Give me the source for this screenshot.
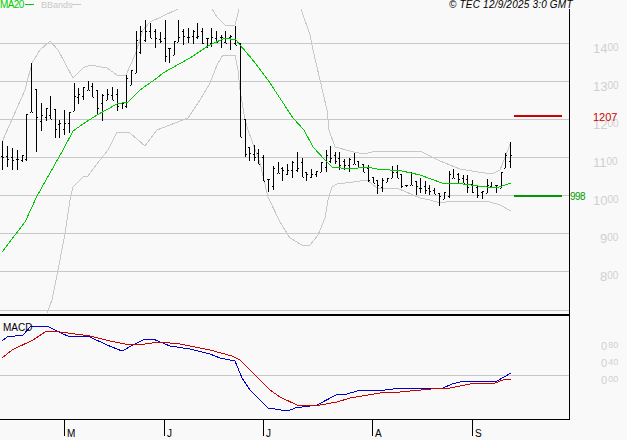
// hi, lo per bar, read off the chart; x is the bar's pixel column
const bars: [number, number, number][] = [
  [2, 141, 170], [7, 146, 167], [12, 148, 170], [17, 150, 170], [22, 155, 162], [26, 114, 161], [31, 63, 112], [36, 89, 152],
  [41, 103, 131], [46, 108, 121], [50, 96, 119], [55, 109, 138], [59, 120, 138], [64, 110, 135], [69, 112, 133], [74, 83, 111],
  [78, 88, 104], [83, 87, 100], [88, 81, 90], [92, 83, 97], [97, 90, 115], [102, 94, 121], [107, 89, 100], [112, 87, 100],
  [117, 89, 111], [122, 103, 109], [126, 75, 108], [131, 70, 85], [136, 31, 73], [140, 26, 54], [145, 20, 42], [150, 23, 38],
  [155, 29, 48], [160, 32, 43], [165, 20, 62], [169, 48, 63], [174, 41, 55], [178, 20, 42], [183, 29, 45], [188, 28, 43],
  [193, 30, 44], [197, 23, 39], [202, 28, 44], [207, 38, 48], [211, 28, 47], [216, 31, 43], [221, 35, 48], [225, 31, 43],
  [230, 35, 50], [235, 26, 45], [240, 43, 137], [245, 119, 157], [249, 147, 161], [254, 145, 161], [258, 149, 164], [263, 155, 181],
  [268, 179, 192], [273, 166, 190], [278, 162, 173], [282, 167, 181], [287, 164, 175], [292, 161, 178], [297, 152, 172], [302, 158, 177],
  [306, 172, 181], [311, 169, 178], [316, 171, 177], [321, 162, 172], [326, 150, 172], [330, 146, 163], [335, 152, 164], [339, 152, 170],
  [344, 159, 170], [349, 158, 172], [354, 153, 164], [358, 161, 167], [363, 164, 172], [368, 165, 182], [373, 177, 183], [377, 180, 194],
  [382, 178, 192], [387, 178, 182], [392, 166, 178], [397, 165, 178], [401, 174, 188], [406, 185, 187], [411, 172, 185], [416, 181, 195],
  [420, 178, 193], [425, 181, 194], [429, 185, 195], [434, 188, 194], [439, 193, 206], [444, 192, 199], [449, 171, 198], [453, 169, 178],
  [458, 173, 183], [463, 175, 183], [467, 175, 193], [472, 180, 193], [477, 186, 198], [482, 191, 199], [487, 179, 193], [491, 182, 187],
  [496, 185, 193], [501, 172, 188], [505, 153, 168], [510, 142, 168],
];

const ma20 =
  "2,252 25,222 37,196 50,173 63,150 73,131 83,124 97,115 117,104 128,102 140,90 157,78 163,73 190,58 208,46 225,38 236,40 240,45 252,59 268,80 293,118 304,130 313,147 325,160 332,167 350,169 367,167 377,169 402,171 420,175 442,183 463,184 478,186 496,188 502,186 511,183";
const upperA =
  "2,142 13,117 25,90 32,63 40,50 50,41 58,50 73,78 83,68 90,65 107,68 117,75 126,75 135,55 143,30 150,22 163,16 178,9";
const upperB = "212,9 217,17 225,25 235,25 239,9";
const upperC =
  "301,9 310,35 313,50 320,80 327,110 329,130 335,147 350,151 363,154 377,151 403,152 420,151 440,161 460,169 478,172 492,174 500,170 511,142";
const lower =
  "47,313 52,300 58,270 65,234 70,200 73,187 83,177 88,176 100,160 108,150 117,132 130,133 145,146 157,130 170,125 188,118 200,100 210,83 217,65 223,55 235,55 238,70 240,90 245,120 248,130 260,163 268,197 280,222 290,238 302,245 310,245 318,235 325,218 328,200 332,187 337,184 353,182 367,180 377,188 397,188 420,198 430,200 440,203 453,201 478,201 490,202 500,205 511,211";
const macd =
  "2,341 7,337 23,335 31,326 47,326 63,334 68,336 90,337 107,345 122,351 133,345 143,340 153,339 170,346 190,349 210,354 220,358 235,361 242,378 250,390 268,408 288,411 295,408 317,405 338,394 347,394 357,391 367,390 377,391 393,389 443,388 452,384 460,382 488,381 497,381 511,373";
const signal =
  "2,358 12,350 33,340 45,332 50,331 60,332 75,334 90,336 110,341 130,345 145,344 160,342 180,344 210,350 232,356 240,360 255,375 270,390 280,397 297,405 320,405 337,402 350,398 380,393 400,392 431,389 450,388 470,384 495,383 503,380 511,379";

const grid = [43, 81, 119, 157, 195, 233, 271, 310];
const priceLabels = [
  { big: "14", small: "00", x: 593, y: 53 },
  { big: "13", small: "00", x: 593, y: 91 },
  { big: "12", small: "00", x: 593, y: 129 },
  { big: "11", small: "00", x: 593, y: 167 },
  { big: "10", small: "00", x: 593, y: 205 },
  { big: "9", small: "00", x: 600, y: 243 },
  { big: "8", small: "00", x: 600, y: 281 },
];
const macdLabels = [
  { big: "0", small: "80", y: 350 },
  { big: "0", small: "40", y: 367 },
  { big: "0", small: "00", y: 384 },
];
const months = [
  { label: "M", x: 64 },
  { label: "J", x: 164 },
  { label: "J", x: 263 },
  { label: "A", x: 372 },
  { label: "S", x: 472 },
];

export default function App() {
  return (
    <div className="h-[440px] w-[627px] overflow-hidden bg-[#f9f9f9] font-['Liberation_Sans',sans-serif]">
      <svg width="627" height="440" viewBox="0 0 627 440" className="block">
        {/* grid */}
        <g stroke="#c8c8c8" shapeRendering="crispEdges">
          {grid.map((y) => (
            <line key={y} x1="0" x2="569" y1={y + 0.5} y2={y + 0.5} />
          ))}
          <line x1="0" x2="569" y1="375.5" y2="375.5" />
        </g>

        {/* bollinger */}
        <g fill="none" stroke="#c8c8c8" shapeRendering="crispEdges">
          <polyline points={upperA} />
          <polyline points={upperB} />
          <polyline points={upperC} />
          <polyline points={lower} />
        </g>

        {/* price bars */}
        <g stroke="#000" shapeRendering="crispEdges">
          {bars.map(([x, hi, lo], i) => {
            const prev = i > 0 ? bars[i - 1] : bars[i];
            const next = i < bars.length - 1 ? bars[i + 1] : bars[i];
            const open = Math.min(lo, Math.max(hi, (prev[1] + prev[2]) / 2));
            const close = Math.min(lo, Math.max(hi, (next[1] + next[2]) / 2));
            return (
              <g key={x}>
                <line x1={x + 0.5} x2={x + 0.5} y1={hi} y2={lo} />
                <line x1={x - 1} x2={x} y1={Math.round(open) + 0.5} y2={Math.round(open) + 0.5} />
                <line x1={x + 1} x2={x + 2} y1={Math.round(close) + 0.5} y2={Math.round(close) + 0.5} />
              </g>
            );
          })}
        </g>

        <polyline points={ma20} fill="none" stroke="#00c800" shapeRendering="crispEdges" />

        {/* support / resistance */}
        <rect x="514" y="115" width="48" height="2" fill="#cc0000" />
        <rect x="514" y="195" width="48" height="2" fill="#009900" />

        {/* frame */}
        <g shapeRendering="crispEdges">
          <rect x="569" y="9" width="1" height="411" fill="#000" />
          <rect x="0" y="314" width="569" height="2" fill="#000" />
          <rect x="0" y="419" width="570" height="1" fill="#000" />
          {months.map((m) => (
            <rect key={m.x} x={m.x} y="419" width="1" height="17" fill="#000" />
          ))}
        </g>

        {/* macd */}
        <polyline points={macd} fill="none" stroke="#0000cc" shapeRendering="crispEdges" />
        <polyline points={signal} fill="none" stroke="#cc0000" shapeRendering="crispEdges" />

        {/* legend */}
        <text x="0" y="8" className="fill-[#00cc00] text-[10px] tracking-[-0.6px]">MA20</text>
        <rect x="25" y="4" width="9" height="1" fill="#00c800" />
        <text x="41" y="8" className="fill-[#c8c8c8] text-[9px]">BBands</text>
        <rect x="72" y="4" width="9" height="1" fill="#c8c8c8" />
        <text x="449" y="8" className="fill-black text-[10px] italic tracking-[0.2px]">© TEC 12/9/2025 3:0 GMT</text>
        <text x="3" y="331" className="fill-black text-[10px]">MACD</text>

        {/* axis labels */}
        <g className="fill-[#d0d0d0]">
          {priceLabels.map((l) => (
            <text key={l.y} x={l.x} y={l.y} className="text-[13px]">
              {l.big}
              <tspan dy="-2" className="text-[10px]">{l.small}</tspan>
            </text>
          ))}
          {macdLabels.map((l) => (
            <text key={l.y} x="601" y={l.y} className="text-[11px]">
              {l.big}
              <tspan dx="1" dy="-2" className="text-[9px]">{l.small}</tspan>
            </text>
          ))}
        </g>
        <text x="593" y="121" className="fill-[#cc0000] text-[11px]">1207</text>
        <text x="570" y="200" className="fill-[#009900] text-[10px] tracking-[-0.5px]">998</text>

        {months.map((m) => (
          <text key={m.x} x={m.x + 3} y="437" className="fill-black text-[10px]">{m.label}</text>
        ))}
      </svg>
    </div>
  );
}
